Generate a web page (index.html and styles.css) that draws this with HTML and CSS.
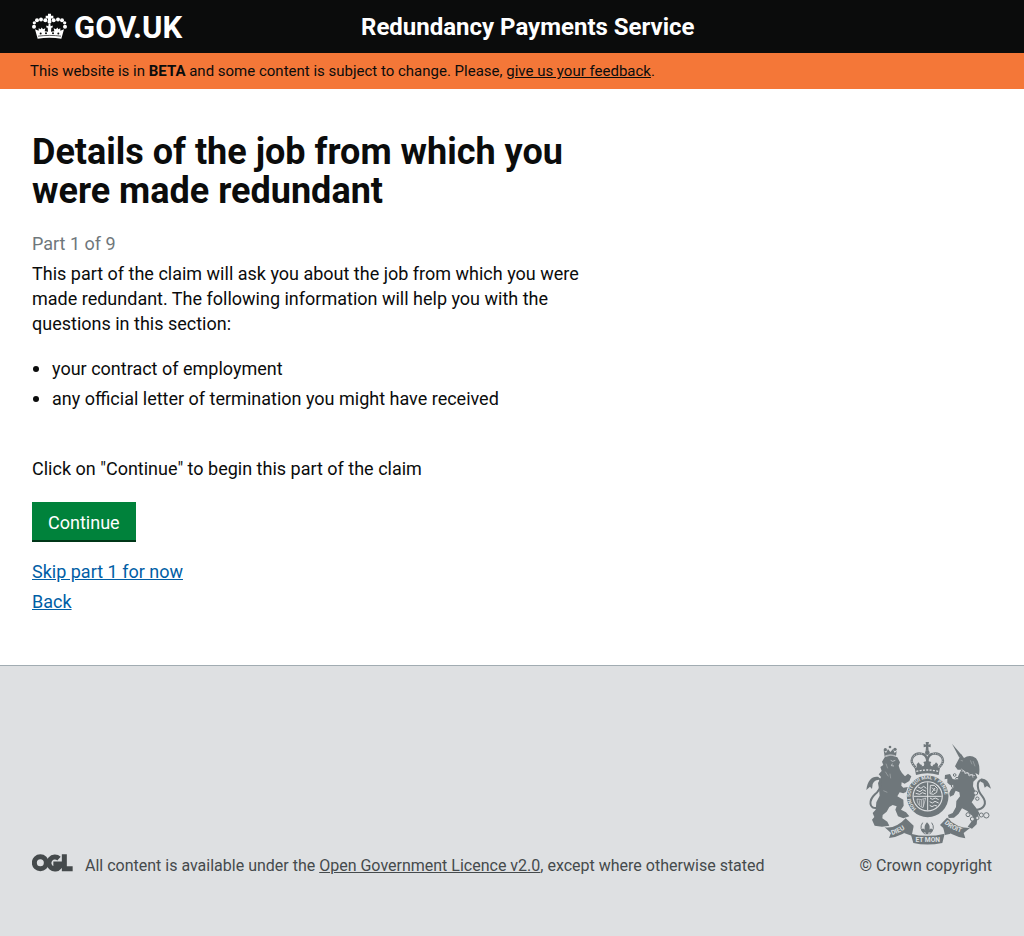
FILE: index.html
```html
<!DOCTYPE html>
<html lang="en">
<head>
<meta charset="utf-8">
<meta name="viewport" content="width=device-width, initial-scale=1">
<title>Redundancy Payments Service</title>
<link rel="stylesheet" href="styles.css">
</head>
<body>
<header class="site-header">
  <a class="logo" href="#">
    <svg class="logo-crown" viewBox="96 37 105 80" aria-hidden="true">
      <g fill="#fff">
        <path d="M144 39h9v6h7v8h-7v7h-9v-7h-7v-8h7z"/>
        <circle cx="148.500" cy="63" r="6"/>
        <circle cx="136" cy="58" r="6"/><circle cx="161" cy="58" r="6"/>
        <circle cx="123" cy="56" r="6"/><circle cx="174" cy="56" r="6"/>
        <circle cx="111" cy="58" r="6"/><circle cx="186" cy="58" r="6"/>
        <circle cx="103" cy="66" r="5"/><circle cx="194" cy="66" r="5"/>
        <circle cx="102" cy="78" r="6"/><circle cx="195" cy="78" r="6"/>
        <path d="M105 85l11 5v-8l6 3 3-5 4 5 7-3-2 9 10 2-1-12-4-1v-6l6 2 1-7h5l1 7 6-2v6l-4 1-1 12 10-2-2-9 7 3 4-5 3 5 6-3v8l11-5-8 29c-22-4-49-4-71 0z"/>
      </g>
      <path d="M114 106c23-3 47-3 69 0" fill="none" stroke="#0b0c0c" stroke-width="2"/>
      <g fill="#0b0c0c"><circle cx="122" cy="98" r="3"/><circle cx="138" cy="97" r="3"/><circle cx="159" cy="97" r="3"/><circle cx="175" cy="98" r="3"/></g>
    </svg>
    <span class="logo-text">GOV.UK</span>
  </a>
  <div class="service-name">Redundancy Payments Service</div>
</header>
<div class="beta-banner">This website is in <strong>BETA</strong> and some content is subject to change. Please, <a href="#">give us your feedback</a>.</div>
<main class="content">
  <div class="column">
    <h1>Details of the job from which you were made redundant</h1>
    <p class="part">Part 1 of 9</p>
    <p class="intro">This part of the claim will ask you about the job from which you were made redundant. The following information will help you with the questions in this section:</p>
    <ul class="needs">
      <li>your contract of employment</li>
      <li>any official letter of termination you might have received</li>
    </ul>
    <p class="prompt">Click on "Continue" to begin this part of the claim</p>
    <button class="button" type="button">Continue</button>
    <ul class="links">
      <li><a href="#">Skip part 1 for now</a></li>
      <li><a href="#">Back</a></li>
    </ul>
  </div>
</main>
<footer class="site-footer">
  <div class="licence">
    <svg class="ogl" viewBox="0 0 123 54" role="img" aria-label="Open Government Licence">
      <g fill="none" stroke="#454a4c" stroke-width="15">
        <circle cx="25" cy="26" r="18"/>
        <path d="M81 14A18 18 0 1 0 83 38V30H64"/>
        <path d="M97 1v43h25"/>
      </g>
    </svg>
    <p>All content is available under the <a href="#">Open Government Licence v2.0</a>, except where otherwise stated</p>
  </div>
  <div class="copyright">
    <svg class="crest" viewBox="20 15 378 312" aria-hidden="true">
      <defs>
        <path id="garter" d="M171 218A51 51 0 1 1 240 217"/>
        <path id="left-scroll" d="M98 297Q124 290 154 267"/>
        <path id="right-scroll" d="M255 262Q280 286 318 293"/>
      </defs>
      <!-- lion -->
      <g transform="translate(12 9)">
        <g fill="#6f777b">
          <path d="M64 55Q82 46 102 55L110 70L106 80L110 92L116 102L125 112L134 104L144 112L138 126L124 134L115 130L114 140L120 146L134 144L135 156L120 163L109 160L102 172L120 182L121 200L113 212L128 220L138 232L120 238L104 232L96 212L100 202L88 198L78 204L70 218L58 228L57 238L72 248L78 260L56 263L34 260L26 242L33 234L28 222L37 212L39 190L49 170L47 150L44 132L53 114L46 106L55 96L51 84L60 78L56 68Z"/>
          <path d="M46 114C28 110 13 122 9 153L20 143L26 150L28 135Q34 122 46 123Z"/>
          <path d="M61 34L68 42L74 30L81 39L89 30L94 42L100 36L98 52Q80 46 64 53Z"/>
          <circle cx="80" cy="24" r="4"/><circle cx="66" cy="32" r="5"/><circle cx="95" cy="31" r="5"/>
        </g>
        <path d="M44 118C58 122 56 148 35 166C16 184 15 212 44 206" fill="none" stroke="#6f777b" stroke-width="6"/>
        <g fill="none" stroke="#dee0e2">
          <path d="M66 50Q81 45 97 50" stroke-width="2"/>
          <path d="M82 64L88 67L96 64M87 74L84 80L92 81" stroke-width="2"/>
          <path d="M68 74L73 88M66 98L75 112M80 104L82 118M60 155L72 160" stroke-width="1"/>
        </g>
      </g>
      <!-- unicorn -->
      <g transform="translate(228 9)">
        <g fill="#6f777b">
          <path d="M50 14L79 48L72 56Z"/>
          <path d="M78 46L86 57Q104 44 122 58Q136 76 131 108L120 102L126 116L114 128L113 142L121 160L117 178L109 190L122 206L132 222L126 238L124 256L110 269L97 263L108 248L112 232L96 216L80 208L70 224L56 236L40 237L38 228L52 222L62 204L63 186L74 172L72 160L61 155L55 168L44 173L40 164L48 150L57 143L44 138L36 131L36 119L28 121L29 108L44 105L52 120L64 122L70 108L78 92L67 92L59 82L66 68Z"/>
          <path d="M136 119Q158 116 167 149L155 141L148 146L144 132L136 128Z"/>
        </g>
        <path d="M140 122C121 124 125 154 141 172C157 192 147 211 120 213" fill="none" stroke="#6f777b" stroke-width="6"/>
        <g fill="none" stroke="#dee0e2">
          <path d="M78 90Q94 106 119 110" stroke-width="2"/>
          <path d="M79 97L86 95L89 104L98 100L101 111L111 106L113 116" stroke-width="2"/>
          <path d="M76 64L83 66M113 66L119 82M105 64L110 76" stroke-width="1"/>
        </g>
        <g fill="#dee0e2" stroke="#6f777b" stroke-width="3">
          <circle cx="58" cy="108" r="4"/><circle cx="65" cy="119" r="4"/><circle cx="52" cy="141" r="4"/>
          <circle cx="121" cy="162" r="6"/><circle cx="126" cy="179" r="5"/>
          <circle cx="98" cy="227" r="6"/><circle cx="111" cy="240" r="6"/><circle cx="126" cy="237" r="5"/><circle cx="138" cy="228" r="6"/><circle cx="153" cy="229" r="8"/>
        </g>
      </g>
      <!-- shield and garter -->
      <circle cx="205" cy="181" r="66" fill="#dee0e2"/>
      <circle cx="205" cy="181" r="54" fill="none" stroke="#6f777b" stroke-width="17"/>
      <circle cx="205" cy="181" r="42" fill="#6f777b"/>
      <path d="M205 139v84M163 181h84" stroke="#dee0e2" stroke-width="3"/>
      <g fill="none" stroke="#dee0e2" stroke-width="3">
        <path d="M176 153l9 4 8-6 8 6M171 162l11 5 8-6 10 5M169 172l12 3 8-5 11 4M212 186l7 4 9-4 10 5M211 197l8 4 8-5 11 5M211 208l7 4 8-4 7 2"/>
        <path d="M213 148h12l9 9-2 12-10 6-10-2zM218 155l10 10M227 156l-10 14"/>
        <path d="M173 189q0 20 18 26l8-29q-14 8-26 3M180 193v14M186 192v20M192 190v22" stroke-width="2"/>
      </g>
      <g class="motto"><text><textPath href="#garter">HONI SOIT QUI MAL Y PENSE</textPath></text></g>
      <!-- crown -->
      <g fill="#6f777b">
        <path d="M199 18h10l-2 8 7-2v10l-7-2 1 12h-9l1-12-7 2V24l7 2z"/>
        <path d="M166 95q38-11 76 0l-4 22q-34-10-68 0z"/>
        <path d="M204 68l4 8 8 2-3 6 4 13h-26l4-13-3-6 8-2zM178 79l4 6 6 2-3 10h-12l-1-12zM230 79l-4 6-6 2 3 10h12l1-12z"/>
        <circle cx="204" cy="50" r="7"/>
      </g>
      <path d="M169 95C143 71 166 47 190 54Q202 57 204 76M239 95C265 71 242 47 218 54Q206 57 204 76" fill="none" stroke="#6f777b" stroke-width="7"/>
      <path d="M169 95C143 71 166 47 190 54M239 95C265 71 242 47 218 54" fill="none" stroke="#dee0e2" stroke-width="2" stroke-dasharray="3 4"/>
      <path d="M171 106q33-8 66 0" stroke="#dee0e2" stroke-width="4" stroke-dasharray="6 4" fill="none"/>
      <!-- scroll -->
      <g fill="#6f777b">
        <path d="M76 274Q110 279 139 247L163 269Q131 301 89 306L95 291Z"/>
        <path d="M139 247q-8 14 6 19l18 5-6 28-23-8 14-18-12-7z"/>
        <path d="M332 276Q291 276 263 245L242 267Q272 300 318 307L313 291Z"/>
        <path d="M263 245q18 9 5 22l-16 10 5 20 17-4-9-21 9-7z"/>
        <path d="M154 293q49 13 102 0l-7 28q-46 9-87 0z"/>
        <path d="M203 259q15 13 4 25 9-12 13-2-2 10-12 7l-1 6h-8l-1-6q-10 3-12-7 4-10 13 2-9-12 4-25z"/>
      </g>
      <path d="M190 260q-13 18 7 35M217 260q13 18-7 35" fill="none" stroke="#6f777b" stroke-width="3"/>
      <g class="scroll-text">
        <text><textPath href="#left-scroll">DIEU</textPath></text>
        <text x="205" y="319" text-anchor="middle">ET MON</text>
        <text><textPath href="#right-scroll">DROIT</textPath></text>
      </g>
    </svg>
    <p>© Crown copyright</p>
  </div>
</footer>
</body>
</html>
```
FILE: styles.css
```css
* { box-sizing: border-box; }
body {
  margin: 0;
  min-height: 100vh;
  display: flex;
  flex-direction: column;
  font-family: Roboto, "Liberation Sans", sans-serif;
  font-size: 18px;
  line-height: 25px;
  color: #0b0c0c;
  background: #fff;
}
h1, p, ul { margin: 0; padding: 0; }
.site-header {
  display: grid;
  grid-template-columns: 1fr 2fr;
  align-items: center;
  min-height: 53px;
  padding: 0 32px;
  background: #0b0c0c;
  color: #fff;
}
.logo {
  display: flex;
  align-items: center;
  gap: 7px;
  color: #fff;
  text-decoration: none;
}
.logo-crown { width: 35px; height: 27px; }
.logo-text { font-size: 31px; line-height: 30px; padding-top: 2px; font-weight: 700; }
.service-name { padding-left: 9px; font-size: 24px; line-height: 30px; font-weight: 700; }
.beta-banner {
  padding: 8px 30px;
  background: #f47738;
  font-size: 15px;
  line-height: 20px;
}
.beta-banner a { color: inherit; }
.content { padding: 44px 32px 46px; }
.column { width: 60%; }
h1 { font-size: 36px; line-height: 39px; font-weight: 700; }
.part { margin-top: 20px; color: #6f777b; }
.intro { margin-top: 5px; }
.needs { margin-top: 20px; padding-left: 20px; }
.needs li::marker { font-size: 21px; }
.needs li, .links li { margin-bottom: 5px; }
.prompt { margin-top: 45px; }
.button {
  display: block;
  margin-top: 21px;
  padding: 8px 16px 5px;
  border: 0;
  border-bottom: 2px solid #003618;
  background: #00823b;
  color: #fff;
  font: inherit;
}
.links { margin-top: 17px; list-style: none; }
.links a { color: #005ea5; }
.site-footer {
  flex: 1;
  display: flex;
  justify-content: space-between;
  align-items: flex-end;
  padding: 75px 32px 60px;
  border-top: 1px solid #a1acb2;
  background: #dee0e2;
  color: #454a4c;
  font-size: 16px;
  line-height: 20px;
}
.site-footer a { color: inherit; }
.licence { display: flex; align-items: flex-end; gap: 12px; }
.ogl { width: 41px; height: 18px; margin-bottom: 4px; }
.copyright { display: flex; flex-direction: column; align-items: flex-end; gap: 11px; }
.crest { width: 126px; height: 104px; }
.motto { font-size: 15px; font-weight: 700; fill: #dee0e2; }
.scroll-text { font-size: 20px; font-weight: 700; fill: #dee0e2; }
```
